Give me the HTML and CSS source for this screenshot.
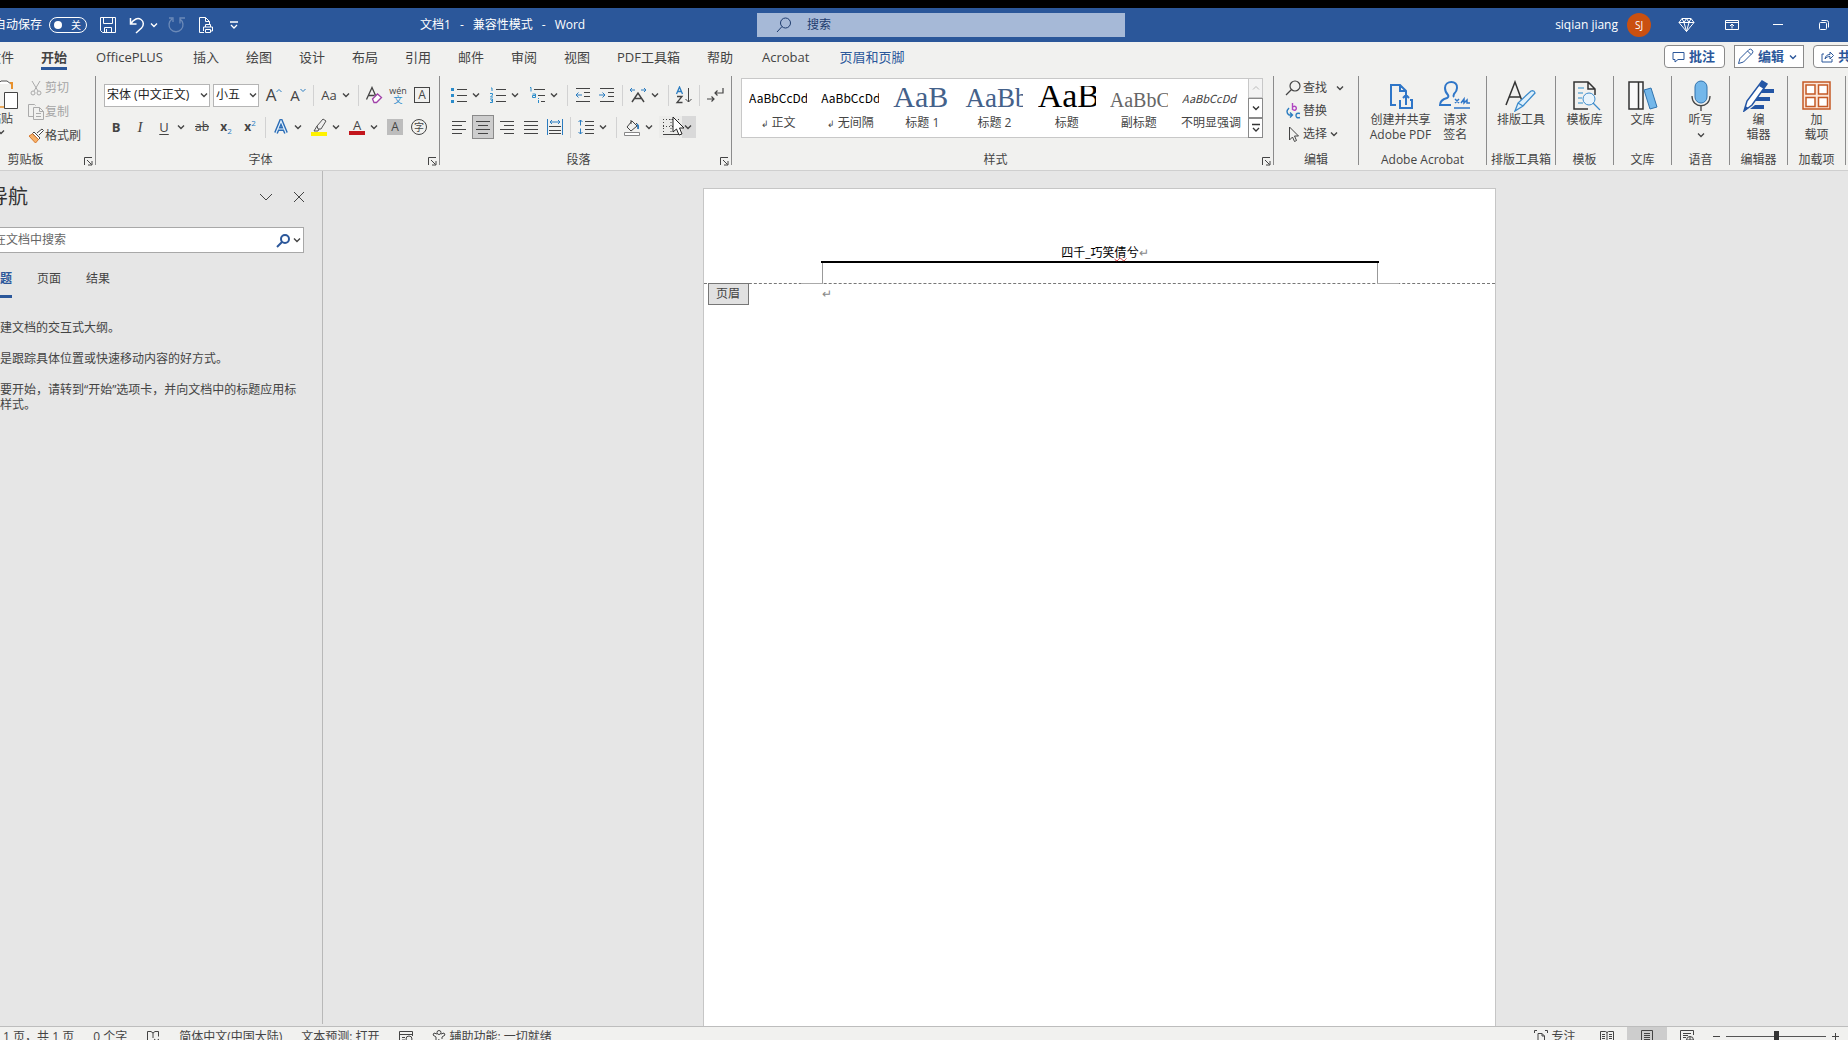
FILE: index.html
```html
<!DOCTYPE html>
<html lang="zh-CN">
<head>
<meta charset="utf-8">
<title>文档1 - 兼容性模式 - Word</title>
<link rel="stylesheet" href="styles.css">
</head>
<body>
<svg class="defs" aria-hidden="true">
  <symbol id="chev" viewBox="0 0 10 10"><path d="M2 3.5l3 3 3-3" fill="none" stroke="currentColor" stroke-width="1.4"/></symbol>
  <symbol id="launch" viewBox="0 0 9 9"><path d="M.5 8V.5H8M3 3l4.500 4.500M8 4v4H4" fill="none" stroke="currentColor"/></symbol>
</svg>
<div class="app">
  <header class="titlebar">
    <div class="quick">
      <span>自动保存</span>
      <button class="toggle" aria-label="自动保存"><i></i><span>关</span></button>
      <button class="qbtn save" aria-label="保存"><svg width="18" height="18" viewBox="0 0 18 18"><path d="M1.500 1.500h15v15h-13l-2-2zM4.500 1.500v6h9v-6M5.500 16.500v-5h7v5M7.500 13v3"/></svg></button>
      <button class="qbtn" aria-label="撤消"><svg width="18" height="18" viewBox="0 0 18 18"><path d="M2.500 2v6h6M2.500 8C6 2.500 10 1.500 13 3.500s3 6 .5 8.500L8 17" stroke-width="1.500"/></svg></button>
      <button class="qchev" aria-label="撤消列表"><svg width="10" height="10"><use href="#chev"/></svg></button>
      <button class="qbtn dim" aria-label="恢复"><svg width="18" height="18" viewBox="0 0 18 18"><path d="M5 3a7 7 0 1 0 8 0M13 7.500V2h5M2 2h4v4" stroke-width="1.300"/></svg></button>
      <button class="qbtn print" aria-label="打印预览"><svg width="18" height="18" viewBox="0 0 18 18"><path d="M7 16.500H2.500v-15h6l4 4V8M8.500 1.500v4h4M8.500 11V8.500h5V11M6.500 15v-4h9v4h-2M8.500 13.500h5v3h-5z"/></svg></button>
      <button class="qbtn custom" aria-label="自定义快速访问工具栏"><svg width="10" height="10" viewBox="0 0 10 10"><path d="M1 2h8M2 5l3 3 3-3" stroke-width="1.300"/></svg></button>
    </div>
    <h1><span>文档1</span><span>-</span><span>兼容性模式</span><span>-</span><span>Word</span></h1>
    <label class="search"><svg width="16" height="16" viewBox="0 0 16 16"><circle cx="9.500" cy="6" r="5"/><path d="M6 9.500L1 15"/></svg><input type="search" placeholder="搜索" aria-label="搜索"></label>
    <div class="account">
      <span>siqian jiang</span><button class="avatar" aria-label="帐户">SJ</button>
      <button class="wbtn" aria-label="高级版"><svg width="17" height="16" viewBox="0 0 17 16"><path d="M4 1.500h9l3 4-7.500 9-7.500-9zM1 5.500h15M4 1.500l2 4 2.500 9 2.500-9 2-4M6 5.500l2.500-4 2.500 4"/></svg></button>
      <button class="wbtn" aria-label="功能区显示选项"><svg width="14" height="12" viewBox="0 0 14 12"><path d="M.5 1.500h13v9H.5zM.5 3.500h13M7 9.500V5.500M5 7l2-2 2 2"/></svg></button>
      <button class="wbtn" aria-label="最小化"><svg width="12" height="12" viewBox="0 0 12 12"><path d="M1 5.500h10"/></svg></button>
      <button class="wbtn" aria-label="还原"><svg width="12" height="12" viewBox="0 0 12 12"><rect x="1.500" y="3.500" width="7" height="7" rx="1"/><path d="M3.500 1.500h5a2 2 0 0 1 2 2v5"/></svg></button>
    </div>
  </header>

  <nav class="tabs">
    <a href="#">文件</a><a href="#" class="on">开始</a><a href="#" class="latin">OfficePLUS</a><a href="#">插入</a><a href="#">绘图</a><a href="#">设计</a><a href="#">布局</a><a href="#">引用</a><a href="#">邮件</a><a href="#">审阅</a><a href="#">视图</a><a href="#">PDF工具箱</a><a href="#">帮助</a><a href="#" class="latin">Acrobat</a><a href="#" class="ctx">页眉和页脚</a>
    <div class="actions">
      <button><svg width="13" height="12" viewBox="0 0 13 12"><path d="M1 1.500h11v7H6l-3 2.500V8.500H1z"/></svg>批注</button>
      <button class="sq"><svg width="17" height="17" viewBox="0 0 17 17"><path d="M1.500 15.500l1.500-5L12 1.500q1.500-1 3 .5t.5 3L6.500 14zM10.500 3l3.500 3.500"/></svg>编辑<svg width="10" height="10"><use href="#chev"/></svg></button>
      <button><svg width="13" height="13" viewBox="0 0 13 13"><path d="M3 4H1v8h10V9M4 9c.5-3 2-4.500 5-4.500V2l3.500 3.500L9 9V6.500C7 6.500 5.500 7 4 9z"/></svg>共享</button>
    </div>
  </nav>

  <div class="ribbon">
    <section class="group clip">
      <div class="body">
        <button class="paste"><svg width="34" height="32" viewBox="0 0 34 32"><path d="M17 3h-5v25h8" fill="none" stroke="#e8912d" stroke-width="1.500"/><path d="M14 5l3-3h6l4 3" fill="#fff" stroke="#555"/><path d="M26 4h2v6" fill="none" stroke="#e8912d" stroke-width="2"/><path d="M20.500 13.500h13v16h-13z" fill="#fff" stroke="#444"/></svg><span>粘贴</span><svg width="10" height="10"><use href="#chev"/></svg></button>
        <div class="stack">
          <button class="off"><svg width="16" height="16" viewBox="0 0 16 16" fill="none" stroke="#aaa"><path d="M4 1l6 10M12 1L6 11"/><circle cx="5" cy="13" r="2"/><circle cx="11" cy="13" r="2"/></svg>剪切</button>
          <button class="off"><svg width="16" height="16" viewBox="0 0 16 16" fill="none" stroke="#aaa"><path d="M5 12.500H.5V.5h6l1 1M5.500 3.500h6l4 4v8h-10zM11.500 3.500v4h4M8 9.500h5M8 12.500h5"/></svg>复制</button>
          <button><svg width="16" height="16" viewBox="0 0 16 16"><path d="M9 5l5-4 1.500 1.500L11 7" fill="#fff" stroke="#444"/><path d="M6 4l6 6-1.500 1.500-6-6z" fill="#fff" stroke="#444"/><path d="M4.500 6L1 8l6.500 7 3-3.500z" fill="#f6b26b" stroke="#d8782b"/></svg>格式刷</button>
        </div>
      </div>
      <h2>剪贴板</h2><button class="launch" aria-label="剪贴板设置"><svg width="9" height="9"><use href="#launch"/></svg></button>
    </section>

    <section class="group font">
      <div class="rows">
        <div class="row">
          <span class="combo name"><select aria-label="字体"><option>宋体 (中文正文)</option></select><svg width="10" height="10"><use href="#chev"/></svg></span>
          <span class="combo size"><select aria-label="字号"><option>小五</option></select><svg width="10" height="10"><use href="#chev"/></svg></span>
          <button class="t" aria-label="增大字号"><b class="grow">A</b><svg width="6" height="14" viewBox="0 0 6 14" fill="none" stroke="#2b7cc0"><path d="M.5 4L3 1.500 5.500 4"/></svg></button>
          <button class="t" aria-label="减小字号"><b class="shrink">A</b><svg width="6" height="14" viewBox="0 0 6 14" fill="none" stroke="#2b7cc0"><path d="M.5 1L3 3.500 5.500 1"/></svg></button>
          <i class="sep"></i>
          <button class="split"><span class="aa">Aa</span><svg width="10" height="10"><use href="#chev"/></svg></button>
          <i class="sep"></i>
          <button class="t" aria-label="清除格式"><svg width="18" height="18" viewBox="0 0 18 18" fill="none"><path d="M1.500 13.500L7 1.500l4 9M3.500 9.500h6" stroke="#444" stroke-width="1.300"/><path d="M7.500 13l5-5 4 3.500-5 5H9z" fill="#fff" stroke="#a040a8" stroke-width="1.300"/></svg></button>
          <button class="t pinyin" aria-label="拼音指南"><span>wén</span><span>文</span></button>
          <button class="t"><span class="boxed">A</span></button>
        </div>
        <div class="row">
          <button class="t bold">B</button><button class="t ital">I</button>
          <button class="split"><span class="und">U</span><svg width="10" height="10"><use href="#chev"/></svg></button>
          <button class="t strike">ab</button>
          <button class="t xs"><span>x<sub>2</sub></span></button><button class="t xs"><span>x<sup>2</sup></span></button>
          <i class="sep"></i>
          <button class="split" aria-label="文本效果"><span><svg width="16" height="16" viewBox="0 0 16 16" fill="none"><path d="M3 14L8 2l5 12M5 10h6" stroke="#2b6cb5" stroke-width="4"/><path d="M3 14L8 2l5 12M5 10h6" stroke="#e5f2fc" stroke-width="1.200"/></svg></span><svg width="10" height="10"><use href="#chev"/></svg></button>
          <button class="split" aria-label="突出显示"><span><svg width="18" height="18" viewBox="0 0 18 18"><path d="M1 14h16v4H1z" fill="#fff200"/><path d="M7 8l6-7 3 2-5 8H8zM7 8l-3 5h4l1-2" fill="#eee" stroke="#555"/></svg></span><svg width="10" height="10"><use href="#chev"/></svg></button>
          <button class="split" aria-label="字体颜色"><span class="acolor">A</span><svg width="10" height="10"><use href="#chev"/></svg></button>
          <button class="t"><span class="shade">A</span></button>
          <button class="t"><span class="ring">字</span></button>
        </div>
      </div>
      <h2>字体</h2><button class="launch" aria-label="字体设置"><svg width="9" height="9"><use href="#launch"/></svg></button>
    </section>

    <section class="group para">
      <div class="rows">
        <div class="row">
          <button class="split" aria-label="项目符号"><span><svg width="16" height="16" viewBox="0 0 16 16"><path d="M0 1h3v3H0zM0 7h3v3H0zM0 13h3v3H0z" fill="#2b8ccb"/><path d="M6 2.500h10M6 8.500h10M6 14.500h10" stroke="#444"/></svg></span><svg width="10" height="10"><use href="#chev"/></svg></button>
          <button class="split" aria-label="编号"><span><svg width="16" height="16" viewBox="0 0 16 16" fill="none"><path d="M1 1h1v3M0 6.500h2.500v1.500L.5 10H3M0 12h2.500v3.500H0M1 13.700h1" stroke="#2b8ccb"/><path d="M6 2.500h10M6 8.500h10M6 14.500h10" stroke="#444"/></svg></span><svg width="10" height="10"><use href="#chev"/></svg></button>
          <button class="split" aria-label="多级列表"><span><svg width="16" height="16" viewBox="0 0 16 16" fill="none"><path d="M1 .5h1v4M3.500 7h3v3.500h-3V8.500h3M9.500 11v1M9.500 13v3" stroke="#2b8ccb"/><path d="M5 2.500h11M9 8.500h7M12 14.500h4" stroke="#444"/></svg></span><svg width="10" height="10"><use href="#chev"/></svg></button>
          <i class="sep"></i>
          <button class="t" aria-label="减少缩进"><svg width="16" height="16" viewBox="0 0 16 16" fill="none"><path d="M1 1.500h14M9 5.500h6M9 9.500h6M1 14.500h14" stroke="#444"/><path d="M7 8H1M3.500 5.500L1 8l2.500 2.500" stroke="#2b7cc0"/></svg></button>
          <button class="t" aria-label="增加缩进"><svg width="16" height="16" viewBox="0 0 16 16" fill="none"><path d="M1 1.500h14M9 5.500h6M9 9.500h6M1 14.500h14" stroke="#444"/><path d="M0 8h6M3.500 5.500L6 8l-2.500 2.500" stroke="#2b7cc0"/></svg></button>
          <i class="sep"></i>
          <button class="split" aria-label="中文版式"><span><svg width="18" height="16" viewBox="0 0 18 16" fill="none"><path d="M3 15l6-9 6 9M5.500 11.500h7" stroke="#444" stroke-width="1.500"/><path d="M6 3H1M3 1L1 3l2 2M12 3h5M15 1l2 2-2 2" stroke="#2b7cc0"/></svg></span><svg width="10" height="10"><use href="#chev"/></svg></button>
          <i class="sep"></i>
          <button class="t" aria-label="排序"><svg width="18" height="18" viewBox="0 0 18 18" fill="none"><path d="M1.500 8L4.500 1l3 7M2.500 5.500h4" stroke="#2b7cc0" stroke-width="1.300"/><path d="M2 10.500h5l-5 6h5.500" stroke="#444" stroke-width="1.300"/><path d="M13.500 2v14M10.500 13l3 3 3-3" stroke="#444"/></svg></button>
          <i class="sep"></i>
          <button class="t" aria-label="显示编辑标记"><svg width="18" height="16" viewBox="0 0 18 16" fill="none" stroke="#444" stroke-width="1.200"><path d="M17 1v5H9M11.500 3.500L9 6l2.500 2.500M1 12h7M5.500 9.500L8 12l-2.500 2.500"/></svg></button>
        </div>
        <div class="row">
          <button class="t" aria-label="左对齐"><svg width="14" height="14" viewBox="0 0 14 14" stroke="#444"><path d="M0 1.500h14M0 5.500h10M0 9.500h14M0 13.500h10"/></svg></button>
          <button class="t sel" aria-label="居中"><svg width="14" height="14" viewBox="0 0 14 14" stroke="#444"><path d="M0 1.500h14M2 5.500h10M0 9.500h14M2 13.500h10"/></svg></button>
          <button class="t" aria-label="右对齐"><svg width="14" height="14" viewBox="0 0 14 14" stroke="#444"><path d="M0 1.500h14M4 5.500h10M0 9.500h14M4 13.500h10"/></svg></button>
          <button class="t" aria-label="两端对齐"><svg width="14" height="14" viewBox="0 0 14 14" stroke="#444"><path d="M0 1.500h14M0 5.500h14M0 9.500h14M0 13.500h14"/></svg></button>
          <button class="t" aria-label="分散对齐"><svg width="16" height="16" viewBox="0 0 16 16" fill="none"><path d="M.5 0v16M15.500 0v16M3 3h10M5 1L3 3l2 2M11 1l2 2-2 2" stroke="#2b7cc0"/><path d="M2 7.500h12M2 11.500h12M2 14.500h12" stroke="#444"/></svg></button>
          <i class="sep"></i>
          <button class="split" aria-label="行距"><span><svg width="16" height="16" viewBox="0 0 16 16" fill="none"><path d="M2.500 1v5.500M2.500 15V9.500M.5 3l2-2 2 2M.5 13l2 2 2-2" stroke="#2b7cc0"/><path d="M7 2.500h9M7 6.500h9M7 10.500h9M7 14.500h9" stroke="#444"/></svg></span><svg width="10" height="10"><use href="#chev"/></svg></button>
          <i class="sep"></i>
          <button class="split" aria-label="底纹"><span><svg width="16" height="17" viewBox="0 0 16 17" fill="none"><path d="M.5 13.500h15v3H.5z" fill="#fff" stroke="#888"/><path d="M8 2L3 8l4 4 6-5zM7 1v4M12 4q3 1 2 6" stroke="#444"/><path d="M13 5q2 2 1 5" stroke="#2b7cc0" stroke-width="1.500"/></svg></span><svg width="10" height="10"><use href="#chev"/></svg></button>
          <button class="split hover" aria-label="边框"><span><svg width="16" height="16" viewBox="0 0 16 16" fill="none" stroke="#444"><path d="M.5 0v15M15.500 0v15M0 .5h16M0 7.500h16M8 0v15" stroke-dasharray="1 2"/><path d="M0 15.500h16"/></svg></span><svg width="10" height="10"><use href="#chev"/></svg>
            <svg class="pointer" width="14" height="21" viewBox="0 0 14 21"><path d="M1 1v15l3.500-3 2.500 6 3-1-2.500-6H12z" fill="#fff" stroke="#222"/></svg></button>
        </div>
      </div>
      <h2>段落</h2><button class="launch" aria-label="段落设置"><svg width="9" height="9"><use href="#launch"/></svg></button>
    </section>

    <section class="group styles">
      <div class="gallery">
        <div class="items">
          <button><span class="pv">AaBbCcDd</span><span><small>↲</small> 正文</span></button>
          <button><span class="pv">AaBbCcDd</span><span><small>↲</small> 无间隔</span></button>
          <button><span class="pv h1">AaB</span><span>标题 1</span></button>
          <button><span class="pv h2">AaBb</span><span>标题 2</span></button>
          <button><span class="pv ti">AaB</span><span>标题</span></button>
          <button><span class="pv su">AaBbCc</span><span>副标题</span></button>
          <button><span class="pv em">AaBbCcDd</span><span>不明显强调</span></button>
        </div>
        <div class="scroll">
          <button class="dis" aria-label="上一行"><svg width="10" height="10" viewBox="0 0 10 10" fill="none" stroke="#bbb"><path d="M2 6.500l3-3 3 3"/></svg></button>
          <button aria-label="下一行"><svg width="10" height="10"><use href="#chev"/></svg></button>
          <button aria-label="更多样式"><svg width="10" height="10" viewBox="0 0 10 10" fill="none" stroke="#333"><path d="M1 1.500h8M2 5l3 3 3-3" stroke-width="1.300"/></svg></button>
        </div>
      </div>
      <h2>样式</h2><button class="launch" aria-label="样式设置"><svg width="9" height="9"><use href="#launch"/></svg></button>
    </section>

    <section class="group edit">
      <div class="stack">
        <button><svg width="16" height="16" viewBox="0 0 16 16" fill="none" stroke="#444" stroke-width="1.200"><circle cx="10" cy="6" r="5"/><path d="M6.500 9.500L1 15"/></svg>查找<svg class="far" width="10" height="10"><use href="#chev"/></svg></button>
        <button><svg width="16" height="16" viewBox="0 0 16 16" fill="none" stroke-width="1.400"><path d="M7.500 0v7M7.500 4.500a2 2 0 1 1 0 1.500" stroke="#b146c2"/><path d="M15 10.500q-4-1-4 2t4 2M4 5q-4 4 0 7h3M5 9.500L7.500 12 5 14.500" stroke="#2b7cc0"/></svg>替换</button>
        <button><svg width="16" height="16" viewBox="0 0 16 16" fill="none" stroke="#444"><path d="M4.500 1v13l3-3 2 4.500 2-1-2-4.500h4z"/></svg>选择<svg width="10" height="10"><use href="#chev"/></svg></button>
      </div>
      <h2>编辑</h2>
    </section>

    <section class="group acro">
      <div class="bigs">
        <button class="big"><svg width="26" height="32" viewBox="0 0 26 32" fill="none" stroke="#2f76c8" stroke-width="2"><path d="M8 25H3V5h9l6 6v4M12 5v6h6M12 20v8h12v-8h-2M18 25V15M15 18l3-3 3 3"/></svg><span>创建并共享<br>Adobe PDF</span></button>
        <button class="big"><svg width="32" height="32" viewBox="0 0 32 32" fill="none" stroke="#2f76c8" stroke-width="2"><path d="M12 25H1q0-5 7-7 2-1 1-3-3-3-3-7c0-8 13-8 12 0q0 3-3 6-1 2 0 3"/><path d="M15 28h16M16 19l4 4M20 19l-4 4M22 23l3-4v4l3-3v3h3" stroke-width="1.500"/></svg><span>请求<br>签名</span></button>
      </div>
      <h2>Adobe Acrobat</h2>
    </section>
    <section class="group typeset">
      <button class="big"><svg width="32" height="32" viewBox="0 0 32 32" fill="none"><path d="M1 25L10 2l7 19M4.500 17h11" stroke="#333" stroke-width="1.500"/><path d="M10 31l3-8 13-12q3-1 4 2L18 26zM13 23l5 3" fill="#dff0fb" stroke="#3b8bcc" stroke-width="1.300"/></svg><span>排版工具</span></button>
      <h2>排版工具箱</h2>
    </section>
    <section class="group one">
      <button class="big"><svg width="32" height="32" viewBox="0 0 32 32" fill="none"><path d="M26 15V9l-7-7H5v27h14M19 2v7h7" stroke="#333" stroke-width="1.500"/><path d="M9 8h6M9 13h5M9 18h4M9 23h5" stroke="#2b8ccb"/><circle cx="20" cy="19" r="6" stroke="#3b8bcc" fill="#e8f4fc"/><path d="M24 23l7 7" stroke="#3b8bcc" stroke-width="1.300"/></svg><span>模板库</span></button>
      <h2>模板</h2>
    </section>
    <section class="group one">
      <button class="big"><svg width="32" height="32" viewBox="0 0 32 32"><path d="M2 2h14v27H2zM11.500 2v27" fill="#fafafa" stroke="#333" stroke-width="1.500"/><path d="M17 10l7-2 6 19-7 2z" fill="#73b7ea" stroke="#3173ad"/></svg><span>文库</span></button>
      <h2>文库</h2>
    </section>
    <section class="group one">
      <button class="big"><svg width="22" height="32" viewBox="0 0 22 32"><rect x="5" y="1" width="12" height="22" rx="6" fill="#73b7ea" stroke="#3173ad"/><path d="M2 16c0 13 18 13 18 0M11 26v5" fill="none" stroke="#444" stroke-width="1.300"/></svg><span>听写</span><svg width="10" height="14" viewBox="0 0 10 14"><path d="M2 6.500l3 3 3-3" fill="none" stroke="#444" stroke-width="1.300"/></svg></button>
      <h2>语音</h2>
    </section>
    <section class="group one">
      <button class="big"><svg width="32" height="32" viewBox="0 0 32 32"><path d="M18 9h13v4H16zM14 17h13v4H11zM12 25h9v4H7z" fill="#2456a5"/><path d="M1 31l3-10L19 1l5 3L9 25z" fill="#fff" stroke="#2456a5" stroke-width="1.500"/><path d="M19 1l5 3-3 5-5-3zM1 31l1.500-5 3 2z" fill="#2456a5"/></svg><span>编<br>辑器</span></button>
      <h2>编辑器</h2>
    </section>
    <section class="group one">
      <button class="big"><svg width="32" height="32" viewBox="0 0 32 32" fill="#fff" stroke="#c55a26" stroke-width="1.500"><path d="M2 2h27v27H2z" fill="#fbe5d8"/><path d="M5 5h9v9H5zM17.500 5h9v9h-9zM5 17.500h9v9H5zM17.500 17.500h9v9h-9z"/></svg><span>加<br>载项</span></button>
      <h2>加载项</h2>
    </section>
  </div>

  <main class="work">
    <aside class="nav">
      <div class="navhead"><h2>导航</h2>
        <button aria-label="任务窗格选项"><svg width="16" height="16" viewBox="0 0 16 16"><path d="M2 5l6 6 6-6"/></svg></button>
        <button aria-label="关闭"><svg width="16" height="16" viewBox="0 0 16 16"><path d="M3 3l10 10M13 3L3 13"/></svg></button></div>
      <label class="find"><input type="text" placeholder="在文档中搜索" aria-label="在文档中搜索"><svg width="15" height="15" viewBox="0 0 15 15" fill="none" stroke="#2b579a" stroke-width="2"><circle cx="9" cy="6" r="4"/><path d="M6 9l-5 5"/></svg><svg width="10" height="10"><use href="#chev"/></svg></label>
      <div class="navtabs"><a href="#" class="on">标题</a><a href="#">页面</a><a href="#">结果</a></div>
      <p>创建文档的交互式大纲。</p>
      <p>它是跟踪具体位置或快速移动内容的好方式。</p>
      <p>若要开始，请转到“开始”选项卡，并向文档中的标题应用标题样式。</p>
    </aside>
    <div class="canvas">
      <article class="page">
        <div class="head"><div class="headtext">四千_巧笑<u>倩</u>兮<span class="mark">↵</span></div><div class="frame"></div></div>
        <div class="first"><span class="tag">页眉</span><span class="mark">↵</span></div>
      </article>
    </div>
  </main>

  <footer class="status">
    <span>第 1 页，共 1 页</span><span>0 个字</span>
    <svg width="14" height="14" viewBox="0 0 14 14"><path d="M6 12H1.500V1.500H5l2 1.500 2-1.500h3.500v5M7 3v5M8 9l5 4M13 9l-5 4"/></svg>
    <span>简体中文(中国大陆)</span><span>文本预测: 打开</span>
    <svg width="14" height="14" viewBox="0 0 14 14"><path d="M13.500 6V1.500H.5v11H6M.5 4.500h13M3 7.500h3M3 10h3"/><circle cx="10" cy="9" r="3"/></svg>
    <span class="acc"><svg width="14" height="14" viewBox="0 0 14 14"><circle cx="7" cy="2.500" r="2"/><path d="M5 4L2 3 1 5l3 2v6l2-1 1-3M9 4l3-1 1 2-3 2v2M8 12l2 2 4-4"/></svg>辅助功能: 一切就绪</span>
    <div class="views">
      <button class="focus"><svg width="14" height="14" viewBox="0 0 14 14"><path d="M.5 3V.5H3M11 .5h2.500V3M4 13V3.500h4l2.500 2.500v7M8 3.500V6h2.500M.5 11v2.500H3"/></svg>专注</button>
      <button aria-label="阅读视图"><svg width="14" height="14" viewBox="0 0 14 14"><path d="M.5 1.500h5L7 2.500l1.500-1h5v10h-5L7 12.500l-1.500-1h-5zM7 2v11M2 4.500h3M2 6.500h3M2 8.500h3M9 4.500h3M9 6.500h3M9 8.500h3"/></svg></button>
      <button class="on" aria-label="页面视图"><svg width="12" height="14" viewBox="0 0 12 14"><path d="M.5 .5h11v13H.5zM3 3.500h6M3 5.500h6M3 7.500h6M3 9.500h6"/></svg></button>
      <button aria-label="Web 版式视图"><svg width="14" height="14" viewBox="0 0 14 14"><path d="M13.500 5V.5H.5v12H6M3 3.500h8M3 5.500h5M3 7.500h3"/><circle cx="10" cy="10" r="3.500"/><path d="M6.500 10h7M10 6.500v7"/></svg></button>
      <button class="z" aria-label="缩小"><svg width="9" height="9" viewBox="0 0 9 9"><path d="M1 4.500h7"/></svg></button>
      <input type="range" aria-label="缩放" min="0" max="100" value="50">
      <button class="z" aria-label="放大"><svg width="9" height="9" viewBox="0 0 9 9"><path d="M1 4.500h7M4.500 1v7"/></svg></button>
    </div>
  </footer>
</div>
</body>
</html>
```
FILE: styles.css
```css
* { box-sizing: border-box; }
body {
  margin: 0;
  height: 100vh;
  overflow: hidden;
  background: #000;
  color: #444;
  font: 12px/16px "Open Sans", "Noto Sans CJK SC", sans-serif;
}
button, input, select { font: inherit; color: inherit; }
button { background: none; border: 0; padding: 0; }
svg { flex: none; }
a { color: inherit; text-decoration: none; }
h1, h2, p { margin: 0; font-size: 12px; font-weight: 400; }
.defs { display: none; }

/* The window runs past both sides and the bottom of the visible screen. */
.app {
  display: flex;
  flex-direction: column;
  height: calc(100vh + 6px);
  margin: 0 -27px 0 -24px;
  padding-top: 8px;
}

.titlebar {
  display: grid;
  grid-template-columns: 444px 337px 368px 1fr;
  align-items: center;
  height: 34px;
  background: #2b579a;
  color: #fff;
}
.titlebar svg { fill: none; stroke: currentColor; }
.titlebar h1 { display: flex; gap: 9px; white-space: nowrap; }
.quick { display: flex; align-items: center; padding-left: 18px; }
.toggle {
  display: flex;
  align-items: center;
  justify-content: space-between;
  width: 38px;
  height: 16px;
  margin-left: 7px;
  padding: 0 5px 0 4px;
  border: 1px solid #fff;
  border-radius: 8px;
  font-size: 10px;
  line-height: 14px;
}
.toggle i { width: 8px; height: 8px; border-radius: 50%; background: #fff; }
.qbtn { display: grid; place-items: center; width: 20px; height: 20px; }
.save { margin: 0 9px 0 11px; }
.qchev { display: grid; width: 10px; margin: 0 7px 0 2px; }
.dim { opacity: .3; }
.print { margin: 0 8px 0 10px; }
.search {
  display: flex;
  align-items: center;
  gap: 15px;
  height: 24px;
  padding-left: 19px;
  background: #a6b9d7;
  color: #1e3c6e;
}
.search input { flex: 1; min-width: 0; border: 0; padding: 0; background: none; outline: 0; }
.search input::placeholder { color: #1e3c6e; opacity: 1; }
.account { display: flex; align-items: center; justify-content: flex-end; padding-right: 28px; }
.avatar {
  width: 24px;
  height: 24px;
  margin: 0 12px 0 9px;
  border-radius: 50%;
  background: #ca5010;
  font-size: 10px;
}
.wbtn { display: grid; place-items: center; width: 46px; height: 34px; }

.tabs {
  display: flex;
  align-items: flex-start;
  gap: 27px;
  height: 34px;
  padding: 6px 0 0 12px;
  background: #f1f1ef;
  font-size: 13px;
  line-height: 19px;
  white-space: nowrap;
}
.tabs a { height: 22px; }
.tabs .on { font-weight: 700; border-bottom: 3px solid #2b579a; }
.tabs .latin { padding: 0 3px 0 2px; }
.tabs .ctx { color: #2b579a; }
.actions { display: flex; gap: 9px; margin: -3px 1px 0 auto; }
.actions button {
  display: flex;
  align-items: center;
  gap: 4px;
  height: 23px;
  padding: 0 9px 0 7px;
  border: 1px solid #8a8a8a;
  border-radius: 4px;
  background: #fff;
  color: #2b579a;
  font-weight: 700;
}
.actions .sq { padding: 0 5px 0 2px; border-radius: 0; }
.actions svg { fill: none; stroke: currentColor; }

.ribbon {
  display: flex;
  height: 95px;
  padding-bottom: 5px;
  background: #f1f1ef;
  border-bottom: 1px solid #cfcfcf;
}
.group {
  position: relative;
  display: flex;
  flex-direction: column;
  justify-content: space-between;
  flex: none;
  border-right: 1px solid #8c8c8c;
}
.group h2 { line-height: 10px; text-align: center; white-space: nowrap; }
.font h2, .para h2, .styles h2 { padding-right: 14px; }
.launch { position: absolute; right: 2px; bottom: -1px; width: 9px; height: 9px; display: grid; }
.clip { width: 120px; }
.clip h2 { padding-right: 20px; }
.clip .body { display: flex; gap: 10px; padding-left: 8px; }
.paste { display: flex; flex-direction: column; align-items: center; padding: 3px 0 0; width: 34px; }
.stack { display: flex; flex-direction: column; }
.stack button { display: flex; align-items: center; gap: 1px; height: 24px; white-space: nowrap; }
.off { color: #a5a5a5; }

.rows { display: flex; flex-direction: column; gap: 8px; padding: 7px 0 0 8px; }
.row { display: flex; align-items: center; height: 24px; }
.font { width: 344px; }
.para { width: 292px; }
.para .rows { padding-left: 7px; }
.combo { display: grid; align-items: center; margin-right: 3px; }
.combo select, .combo > svg { grid-area: 1 / 1; }
.combo > svg { justify-self: end; margin-right: 1px; pointer-events: none; }
.combo select {
  appearance: none;
  width: 100%;
  height: 23px;
  padding: 0 0 0 2px;
  border: 1px solid #b5b5b5;
  border-radius: 0;
  background: #fff;
  color: #222;
}
.name { width: 106px; }
.size { width: 46px; }
.t, .split { display: flex; align-items: center; flex: none; height: 24px; }
.t { justify-content: center; width: 24px; }
.split { width: 38px; }
.split > span { display: grid; place-items: center; width: 24px; }
.sep { width: 7px; height: 21px; flex: none; background: linear-gradient(#d2d2d2, #d2d2d2) center / 1px 100% no-repeat; }
.para .split { width: 39px; }
.grow { font-size: 17px; font-weight: 400; }
.shrink { font-size: 15px; font-weight: 400; }
.aa { font-size: 13px; }
.bold { font-weight: 700; font-size: 13px; }
.ital { font: italic 15px "Liberation Serif", serif; }
.und { font-size: 13px; text-decoration: underline; text-underline-offset: 2px; }
.strike { text-decoration: line-through; }
.xs { font-weight: 700; }
.xs sub, .xs sup { font-size: 8px; font-weight: 400; color: #2b7cc0; line-height: 8px; }
.pinyin { flex-direction: column; font-size: 9px; line-height: 9px; }
.pinyin span + span { color: #2b8ccb; }
.boxed { width: 16px; height: 16px; border: 1px solid #444; line-height: 14px; text-align: center; }
.split .acolor { width: 16px; margin: 0 4px; height: 16px; border-bottom: 4px solid #c3161c; font-size: 13px; line-height: 12px; }
.shade { width: 16px; background: #bdbdbd; text-align: center; }
.ring { width: 16px; height: 16px; border: 1px solid #444; border-radius: 50%; font-size: 10px; line-height: 14px; text-align: center; }
.sel { width: 22px; margin: 0 1px; border: 1px solid #8a8a8a; background: #cdcdcd; }
.para .hover { position: relative; width: 37px; height: 22px; background: linear-gradient(90deg, #ececea 23px, #d9d9d9 23px); }
.pointer { position: absolute; left: 13px; top: 0; }

.styles { flex: 1; min-width: 0; }
.gallery { display: flex; height: 60px; margin: 2px 10px 0 9px; border: 1px solid #c8c8c8; background: #fff; }
.items { display: flex; flex: 1; min-width: 0; padding-right: 2px; }
.items button { flex: 1; min-width: 0; display: flex; flex-direction: column; align-items: center; padding-top: 7px; }
.pv {
  width: 58px;
  height: 22px;
  margin-bottom: 7px;
  overflow: hidden;
  color: #000;
  font-family: "Noto Sans CJK SC", sans-serif;
  line-height: 24px;
  text-align: left;
  white-space: nowrap;
}
.items small { font-size: 9px; }
.pv.h1, .pv.h2, .pv.ti, .pv.su { font-family: "Liberation Serif", serif; color: #44618a; }
.pv.h1 { font-size: 30px; line-height: 22px; }
.pv.h2 { font-size: 27px; }
.pv.ti { font-size: 34px; color: #000; line-height: 20px; }
.pv.su { font-size: 20px; color: #666; line-height: 28px; }
.pv.em { font-size: 11px; font-style: italic; color: #404040; }
.scroll { display: flex; flex-direction: column; width: 15px; margin: -1px; }
.scroll button { flex: 1; display: grid; place-items: center; border: 1px solid #8a8a8a; color: #333; }
.scroll .dis { border-color: #c8c8c8; background: #f3f3f3; }

.edit { width: 85px; }
.edit .stack { padding-left: 11px; }
.edit .stack button { gap: 2px; height: 23px; }
.edit .far { margin-left: 6px; }
.bigs { display: flex; justify-content: center; gap: 8px; padding-right: 4px; }
.big { display: flex; flex-direction: column; align-items: center; padding-top: 4px; line-height: 15px; white-space: nowrap; }
.acro { width: 128px; }
.typeset { width: 69px; }
.one { width: 58px; }
.ribbon::after { content: ""; flex: 0 0 29px; }

.work { display: flex; flex: 1; min-height: 0; background: #e6e6e6; }
.nav { flex: 0 0 347px; margin-bottom: 2px; padding: 12px 18px 0 12px; border-right: 1px solid #b8b8b8; }
.navhead { display: flex; align-items: center; gap: 17px; height: 28px; }
.navhead h2 { flex: 1; font-size: 20px; line-height: 28px; color: #333; }
.navhead button { display: grid; }
.navhead button:last-child { margin-right: -3px; }
.navhead svg { fill: none; stroke: #444; }
.find { display: flex; align-items: center; gap: 1px; height: 26px; margin-top: 16px; padding: 0 1px 0 5px; border: 1px solid #a8a8a8; background: #fff; }
.find input { flex: 1; min-width: 0; border: 0; padding: 0; background: none; outline: 0; }
.find input::placeholder { color: #666; opacity: 1; }
.navtabs { display: flex; gap: 25px; margin: 18px 0 22px; }
.navtabs a { height: 27px; }
.navtabs .on { border-bottom: 3px solid #2b579a; color: #2b579a; font-weight: 700; }
.nav p { margin-bottom: 16px; line-height: 15px; }

.canvas { flex: 1; min-width: 0; display: flex; justify-content: center; padding-top: 17px; }
.page { width: 793px; border: 1px solid #c6c6c6; border-bottom: 0; background: #fff; color: #000; }
.head { padding: 56px 116px 0 117px; border-bottom: 1px dashed #777; }
.headtext { padding-left: 11px; border-bottom: 2px solid #000; line-height: 16px; text-align: center; }
.headtext u { text-decoration: underline wavy #c33 1px; text-underline-offset: 0; }
.frame { position: relative; height: 20px; margin: 0 1px; border: solid #999; border-width: 0 1px; }
.frame::before, .frame::after { content: ""; position: absolute; bottom: -1px; width: 22px; height: 1px; background: #aaa; }
.frame::before { right: 100%; }
.frame::after { left: 100%; }
.mark { color: #888; font-size: 12px; }
.first { display: flex; align-items: flex-start; gap: 73px; margin-top: -1px; padding-left: 4px; }
.first .mark { line-height: 22px; }
.tag { position: relative; width: 41px; height: 22px; border: 1px solid #777; background: #e1e1e1; color: #444; line-height: 19px; text-align: center; }

.status {
  display: flex;
  align-items: center;
  height: 20px;
  gap: 19px;
  padding: 0 35px 0 12px;
  border-top: 1px solid #bdbdbd;
  background: #f1f1ef;
  white-space: nowrap;
}
.status svg { fill: none; stroke: #444; }
.acc, .views, .focus { display: flex; align-items: center; gap: 4px; }
.views { gap: 0; margin-left: auto; height: 100%; }
.views button { display: flex; align-items: center; justify-content: center; width: 40px; height: 100%; }
.views .focus { width: 53px; padding-right: 12px; }
.views .on { background: #cdcdcd; }
.views .z { width: 9px; }
.views .z:nth-of-type(5) { margin-left: 5px; }
.views input { appearance: none; width: 100px; height: 12px; margin: 0 5px; background: linear-gradient(#555, #555) center / 100% 1px no-repeat; }
.views input::-webkit-slider-thumb { appearance: none; width: 5px; height: 12px; background: #333; }
```
